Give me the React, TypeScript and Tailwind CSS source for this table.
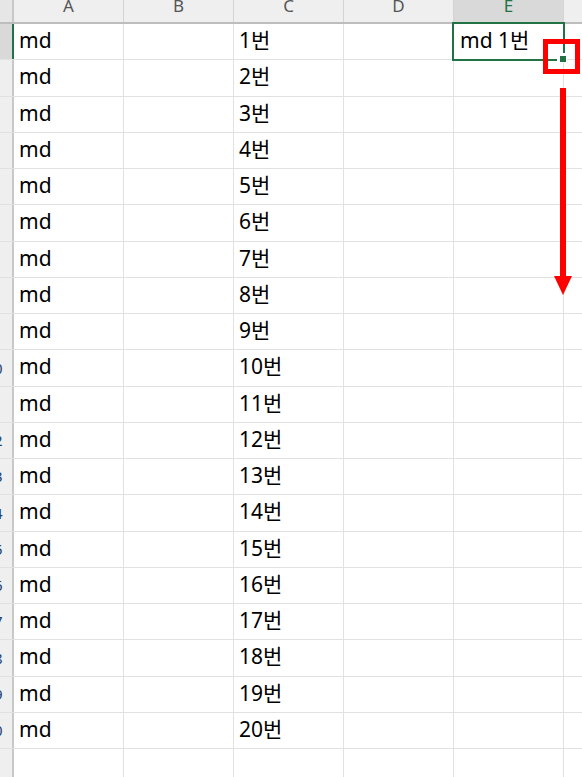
import React from "react";

const cols = ["A", "B", "C", "D", "E", "F"];

export default function App() {
  const rows = Array.from({ length: 21 }, (_, i) => i + 1);
  return (
    <div
      className="relative w-[582px] h-[777px] overflow-hidden bg-white"
      style={{ fontFamily: "'Noto Sans', 'Noto Sans CJK KR', sans-serif" }}
    >
      {/* column header */}
      <div className="flex h-[24px] bg-[#efefef] border-b-2 border-[#bdbdbd]">
        <div className="w-[14px] shrink-0 border-r-2 border-[#c8c8c8] bg-[#e6e6e6]" />
        {cols.map((c) => (
          <div
            key={c}
            className={
              "w-[110px] shrink-0 border-r border-[#d4d4d4] flex justify-center overflow-hidden " +
              (c === "E" ? "bg-[#d9d9d9] text-[#217346]" : "text-[#555555]")
            }
          >
            <span className="text-[17px] leading-[17px] mt-[-3px]">{c}</span>
          </div>
        ))}
      </div>
      {/* rows */}
      {rows.map((r) => (
        <div key={r} className="flex h-[36.25px] border-b border-[#e1e1e1]">
          <div
            className={
              "w-[14px] shrink-0 border-r-2 overflow-hidden flex items-center " +
              (r === 1 ? "bg-[#d9d9d9] border-[#217346]" : "bg-[#efefef] border-[#c8c8c8]")
            }
          >
            <div className="w-[36px] shrink-0 ml-[-24px] text-center text-[15px] text-[#1f3f6a]">
              {r}
            </div>
          </div>
          <div className="w-[110px] shrink-0 border-r border-[#e1e1e1] pl-[5px] pt-[4px] text-[21px] leading-[24px] text-black">
            {r <= 20 ? "md" : ""}
          </div>
          <div className="w-[110px] shrink-0 border-r border-[#e1e1e1]" />
          <div className="w-[110px] shrink-0 border-r border-[#e1e1e1] pl-[5px] pt-[4px] text-[21px] leading-[24px] text-black">
            {r <= 20 ? `${r}번` : ""}
          </div>
          <div className="w-[110px] shrink-0 border-r border-[#e1e1e1]" />
          <div className="w-[110px] shrink-0 border-r border-[#e1e1e1] pl-[6px] pt-[4px] text-[21px] leading-[24px] text-black whitespace-nowrap">
            {r === 1 ? "md 1번" : ""}
          </div>
          <div className="w-[110px] shrink-0" />
        </div>
      ))}

      {/* selection border */}
      <div className="absolute left-[452px] top-[22px] w-[113px] h-[39px] border-2 border-[#217346]" />
      {/* fill handle with white gap */}
      <div className="absolute left-[557px] top-[53px] w-[10px] h-[10px] bg-white" />
      <div className="absolute left-[560px] top-[56px] w-[6px] h-[6px] bg-[#217346]" />

      {/* red highlight box */}
      <div className="absolute left-[543px] top-[39px] w-[37px] h-[35px] border-[5px] border-[#ff0000]" />

      {/* red arrow */}
      <svg className="absolute left-[550px] top-[86px]" width="26" height="212" viewBox="0 0 26 212">
        <rect x="10" y="2" width="6" height="190" fill="#ff0000" />
        <polygon points="4,190 22,190 13,209" fill="#ff0000" />
      </svg>
    </div>
  );
}
